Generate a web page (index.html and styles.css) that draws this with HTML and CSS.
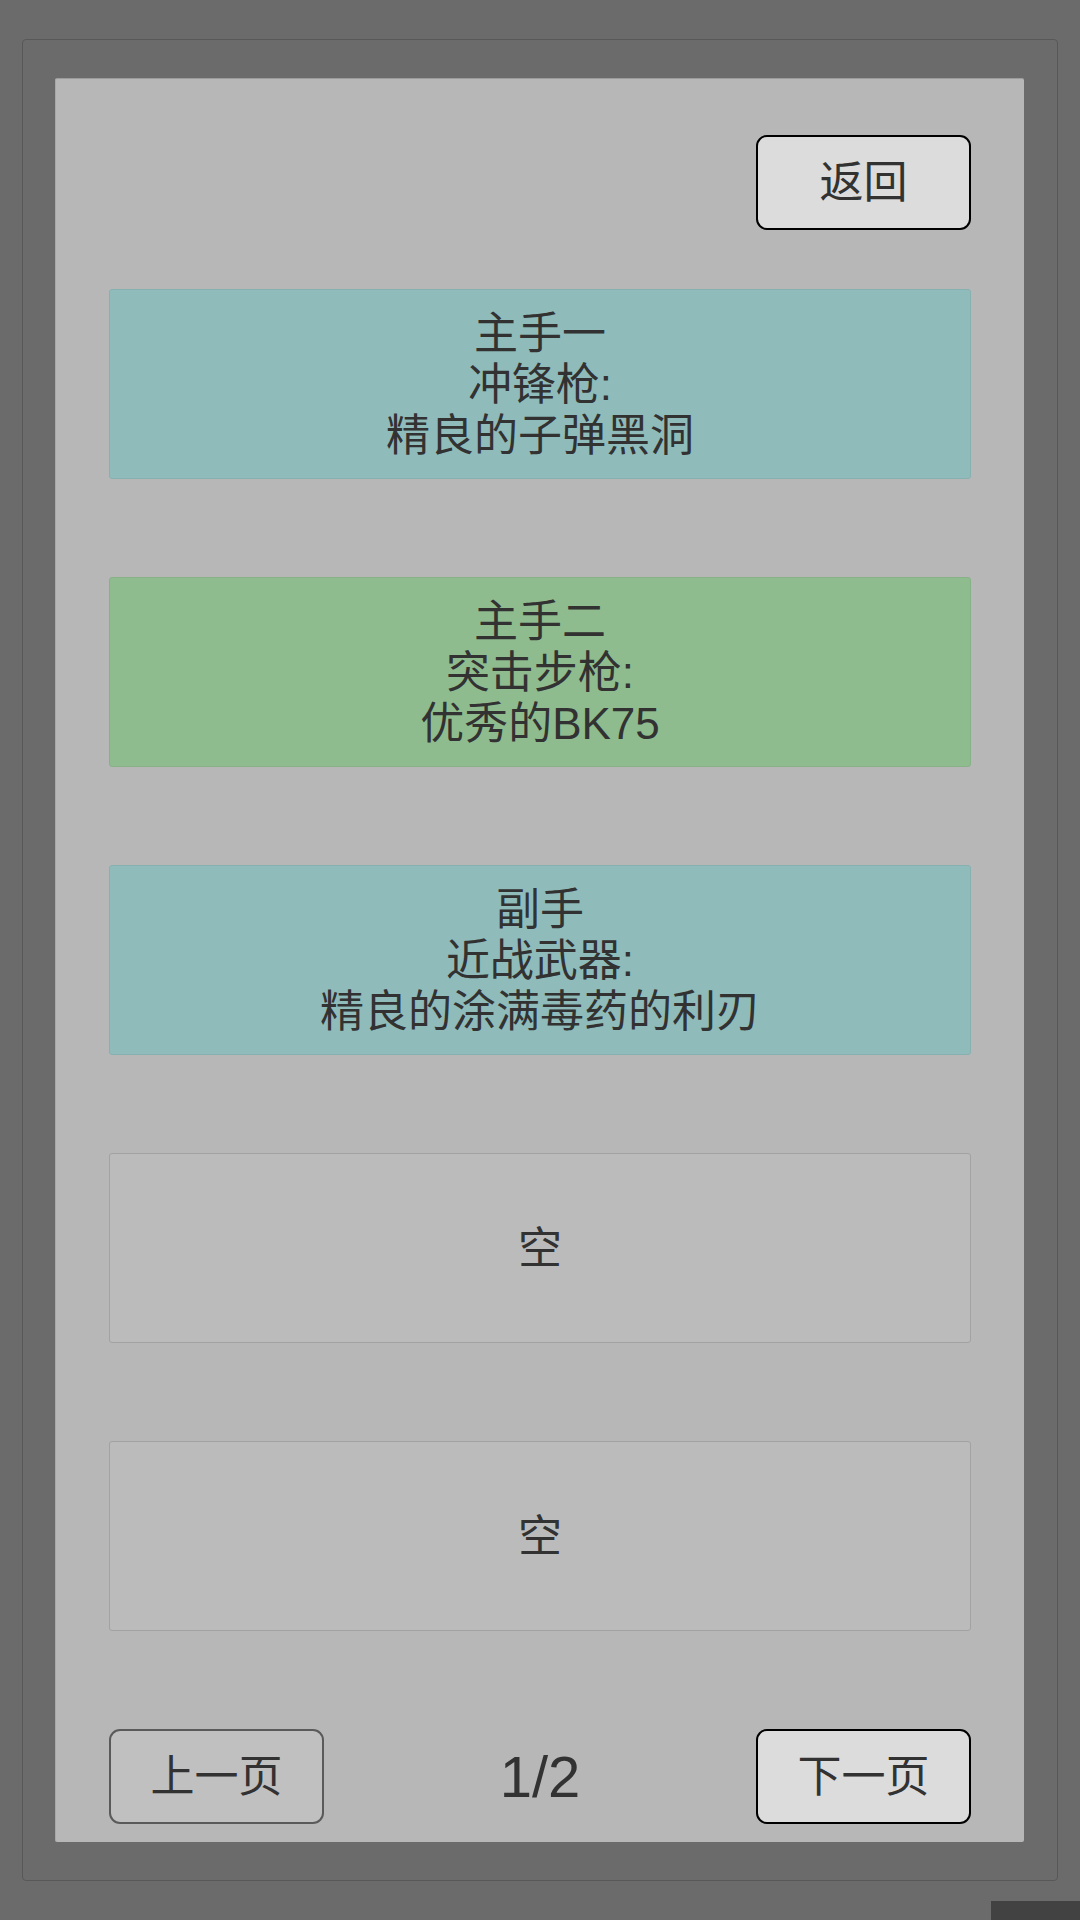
FILE: index.html
```html
<!DOCTYPE html>
<html lang="zh-CN">
<head>
<meta charset="utf-8">
<title>装备</title>
<link rel="stylesheet" href="styles.css">
</head>
<body>
<div class="frame">
  <div class="panel">
    <div class="top-row">
      <div class="btn btn-primary">返回</div>
    </div>
    <div class="slots">
      <div class="slot slot-rare">主手一<br>冲锋枪:<br>精良的子弹黑洞</div>
      <div class="slot slot-good">主手二<br>突击步枪:<br>优秀的BK75</div>
      <div class="slot slot-rare">副手<br>近战武器:<br>精良的涂满毒药的利刃</div>
      <div class="slot slot-empty">空</div>
      <div class="slot slot-empty">空</div>
    </div>
    <div class="pager">
      <div class="btn btn-secondary">上一页</div>
      <div class="page-num">1/2</div>
      <div class="btn btn-primary">下一页</div>
    </div>
  </div>
</div>
<div class="corner"></div>
</body>
</html>
```

FILE: styles.css
```css
html, body {
  margin: 0;
  padding: 0;
}
body {
  width: 1080px;
  height: 1920px;
  background: #6b6b6b;
  font-family: "Liberation Sans", "Noto Sans CJK SC", sans-serif;
  color: #323232;
  position: relative;
  overflow: hidden;
  padding-top: 39px;
  box-sizing: border-box;
}
.frame {
  margin-left: 22px;
  width: 1036px;
  height: 1842px;
  box-sizing: border-box;
  border: 1px solid #585858;
  border-radius: 4px;
  padding: 38px 32px 0 32px;
}
.panel {
  width: 969px;
  height: 1764px;
  box-sizing: border-box;
  background: #b7b7b7;
  border-top: 1px solid #9c9c9c;
  border-left: 1px solid #a8a8a8;
  border-radius: 2px;
  padding: 56px 53px 0 53px;
  display: flex;
  flex-direction: column;
}
.top-row {
  display: flex;
  justify-content: flex-end;
  height: 94px;
}
.btn {
  width: 215px;
  height: 95px;
  box-sizing: border-box;
  border-radius: 11px;
  display: flex;
  align-items: center;
  justify-content: center;
  font-size: 44px;
  line-height: 1;
}
.btn-primary {
  background: #dcdcdc;
  border: 2px solid #000;
}
.btn-secondary {
  background: #c0c0c0;
  border: 2px solid #5a5a5a;
}
.slots {
  margin-top: 60px;
  display: flex;
  flex-direction: column;
  gap: 98px;
}
.slot {
  height: 190px;
  box-sizing: border-box;
  border-radius: 3px;
  display: flex;
  align-items: center;
  justify-content: center;
  text-align: center;
  font-size: 44px;
  line-height: 51px;
}
.slot-rare {
  background: #8fbcbb;
  border: 1px solid #86b1b0;
}
.slot-good {
  background: #8fbc8f;
  border: 1px solid #87b287;
}
.slot-empty {
  background: #bbbbbb;
  border: 1px solid #a2a2a2;
}
.pager {
  margin-top: 98px;
  display: flex;
  justify-content: space-between;
  align-items: center;
}
.page-num {
  font-size: 58px;
  line-height: 1;
}
.corner {
  position: absolute;
  right: 0;
  bottom: 0;
  width: 89px;
  height: 19px;
  background: #424242;
}
```
